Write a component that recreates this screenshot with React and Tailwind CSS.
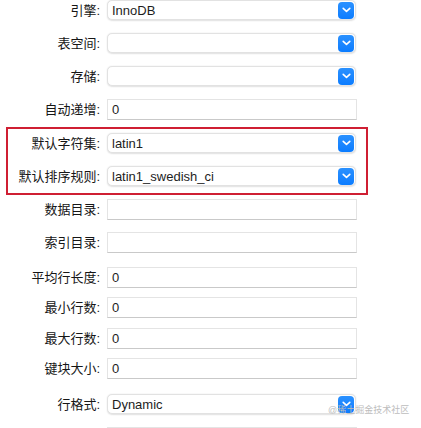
import React from "react";

const rows = [
  { label: "引擎", type: "select", value: "InnoDB", mt: "mt-[-1px]" },
  { label: "表空间", type: "select", value: "", mt: "mt-[11px]" },
  { label: "存储", type: "select", value: "", mt: "mt-[11px]" },
  { label: "自动递增", type: "text", value: "0", mt: "mt-[11px]" },
  { label: "默认字符集", type: "select", value: "latin1", mt: "mt-[12px]" },
  { label: "默认排序规则", type: "select", value: "latin1_swedish_ci", mt: "mt-[11px]" },
  { label: "数据目录", type: "text", value: "", mt: "mt-[11px]" },
  { label: "索引目录", type: "text", value: "", mt: "mt-[11px]" },
  { label: "平均行长度", type: "text", value: "0", mt: "mt-[13px]" },
  { label: "最小行数", type: "text", value: "0", mt: "mt-[8px]" },
  { label: "最大行数", type: "text", value: "0", mt: "mt-[9px]" },
  { label: "键块大小", type: "text", value: "0", mt: "mt-[8px]" },
  { label: "行格式", type: "select", value: "Dynamic", mt: "mt-[14px]" },
  { label: "", type: "text", value: "", mt: "mt-[11px]" },
];

function Chevron() {
  return (
    <svg width="9" height="6" viewBox="0 0 9 6" fill="none">
      <path d="M1.2 1.3 L4.5 4.4 L7.8 1.3" stroke="white" strokeWidth="1.6" strokeLinecap="round" strokeLinejoin="round" />
    </svg>
  );
}

function Field({ type, value }) {
  if (type === "select") {
    return (
      <div className="flex h-[20px] w-[249px] items-center justify-between rounded-[5px] border border-[#e2e2e2] bg-white pl-[4px] pr-[1px] shadow-[0_0.5px_1.5px_rgba(0,0,0,0.12)]">
        <span className="text-[13px] leading-none text-[#1d1d1d]">{value}</span>
        <div className="flex h-[17px] w-[16px] items-center justify-center rounded-[4px] bg-gradient-to-b from-[#2a91ff] to-[#0a7cff]">
          <Chevron />
        </div>
      </div>
    );
  }
  return (
    <div className="flex h-[21px] w-[250px] items-center border border-[#e4e4e4] border-b-[#c9c9c9] bg-white pl-[4px]">
      <span className="text-[13px] leading-none text-[#1d1d1d]">{value}</span>
    </div>
  );
}

export default function App() {
  return (
    <div
      className="relative h-[428px] w-[421px] overflow-hidden bg-white"
      style={{ fontFamily: '"Liberation Sans", "Noto Sans CJK SC", sans-serif' }}
    >
      <div className="flex flex-col">
        {rows.map((r, i) => (
          <div key={i} className={`flex h-[22px] items-center ${r.mt}`}>
            <div className="w-[101px] pr-[1px] text-right text-[13px] leading-none text-[#161616]">
              {r.label ? `${r.label}:` : ""}
            </div>
            <div className="ml-[6px]">
              <Field type={r.type} value={r.value} />
            </div>
          </div>
        ))}
      </div>
      <div className="pointer-events-none absolute left-[6px] top-[127px] h-[68px] w-[362px] border-2 border-[#cf1f33]" />
      <div className="pointer-events-none absolute left-[328px] top-[406px] whitespace-nowrap text-[9px] leading-none text-[#bdbdbd]">
        @稀土掘金技术社区
      </div>
    </div>
  );
}
